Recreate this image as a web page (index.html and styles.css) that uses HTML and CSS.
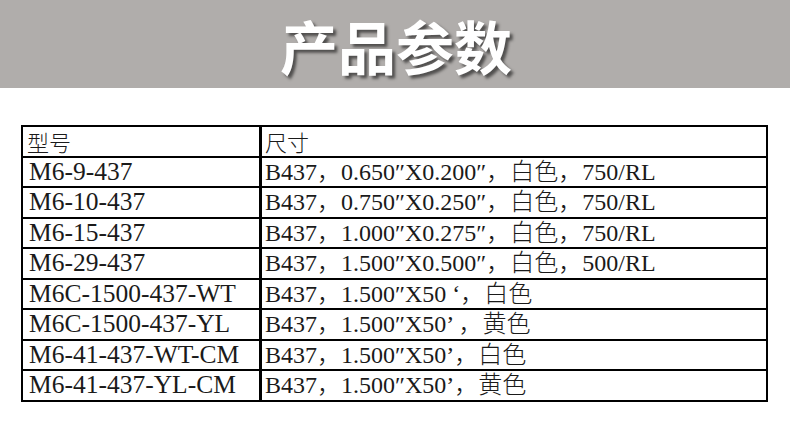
FILE: index.html
```html
<!DOCTYPE html>
<html lang="zh-CN">
<head>
<meta charset="utf-8">
<title>产品参数</title>
<link rel="stylesheet" href="styles.css">
</head>
<body>
<header class="banner"><h1 class="title">产品参数</h1></header>
<main class="wrap">
<table class="spec">
<thead>
<tr><th class="c1">型号</th><th class="c2">尺寸</th></tr>
</thead>
<tbody>
<tr><td class="c1">M6-9-437</td><td class="c2">B437，0.650″X0.200″，白色，750/RL</td></tr>
<tr><td class="c1">M6-10-437</td><td class="c2">B437，0.750″X0.250″，白色，750/RL</td></tr>
<tr><td class="c1">M6-15-437</td><td class="c2">B437，1.000″X0.275″，白色，750/RL</td></tr>
<tr><td class="c1">M6-29-437</td><td class="c2">B437，1.500″X0.500″，白色，500/RL</td></tr>
<tr><td class="c1">M6C-1500-437-WT</td><td class="c2">B437，1.500″X50 ‘，白色</td></tr>
<tr><td class="c1">M6C-1500-437-YL</td><td class="c2">B437，1.500″X50’ ，黄色</td></tr>
<tr><td class="c1">M6-41-437-WT-CM</td><td class="c2">B437，1.500″X50’，白色</td></tr>
<tr><td class="c1">M6-41-437-YL-CM</td><td class="c2">B437，1.500″X50’，黄色</td></tr>
</tbody>
</table>
</main>
</body>
</html>
```
FILE: styles.css
```css
html, body {
  margin: 0;
  padding: 0;
  background: #ffffff;
}
body {
  font-family: "Liberation Serif", "Noto Sans CJK SC", serif;
  color: #1a1a1a;
}
.banner {
  height: 88px;
  background: #b0adab;
  display: flex;
  align-items: center;
  justify-content: center;
}
.title {
  margin: 0;
  font-family: "Noto Sans CJK SC", sans-serif;
  font-weight: 700;
  font-size: 58px;
  line-height: 60px;
  color: #ffffff;
  text-shadow: 3px 3px 3px rgba(0, 0, 0, 0.55);
  padding: 2px 0 0 2px;
}
.wrap {
  padding: 37px 0 0 21px;
}
.spec {
  border-collapse: collapse;
  width: 747px;
  table-layout: fixed;
}
.spec th, .spec td {
  border: 2px solid #000;
  height: 28.5px;
  padding: 0 0 0 4px;
  text-align: left;
  vertical-align: middle;
  font-weight: 300;
  line-height: 28px;
  white-space: nowrap;
  overflow: hidden;
}
.spec .c1 {
  width: 232px;
  border-right-width: 3px;
}
.spec td.c1 {
  font-size: 25.5px;
  padding-left: 6px;
}
.spec td.c2 {
  font-size: 24px;
  padding-left: 3px;
}
.spec th {
  font-family: "Noto Sans CJK SC", sans-serif;
  font-size: 22px;
}
.spec th.c2 {
  padding-left: 3px;
}
```
